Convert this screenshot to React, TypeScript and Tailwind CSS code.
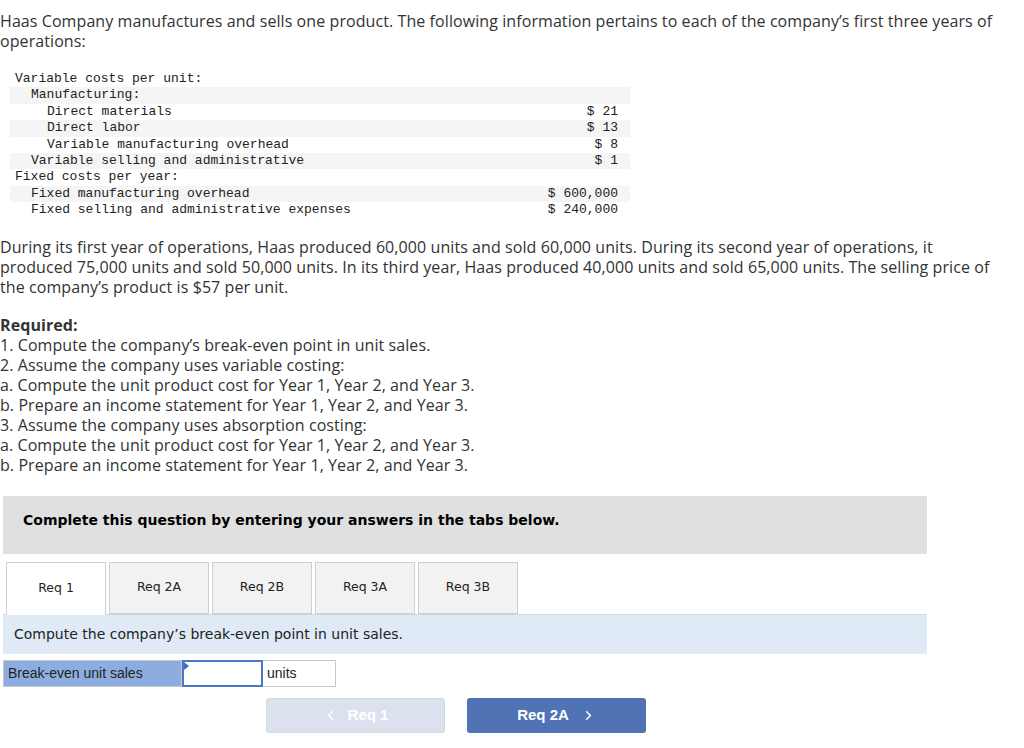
import React from "react";
import { ChevronLeft, ChevronRight } from "lucide-react";

const rows: { label: string; indent: number; value?: string }[] = [
  { label: "Variable costs per unit:", indent: 0 },
  { label: "Manufacturing:", indent: 1 },
  { label: "Direct materials", indent: 2, value: "$ 21" },
  { label: "Direct labor", indent: 2, value: "$ 13" },
  { label: "Variable manufacturing overhead", indent: 2, value: "$ 8" },
  { label: "Variable selling and administrative", indent: 1, value: "$ 1" },
  { label: "Fixed costs per year:", indent: 0 },
  { label: "Fixed manufacturing overhead", indent: 1, value: "$ 600,000" },
  { label: "Fixed selling and administrative expenses", indent: 1, value: "$ 240,000" },
];

const tabs = ["Req 1", "Req 2A", "Req 2B", "Req 3A", "Req 3B"];

export default function App() {
  return (
    <div className="w-[1024px] h-[748px] bg-white text-[#333] overflow-hidden">
      {/* Problem text */}
      <div className="font-['Open_Sans',sans-serif] text-[16px] tracking-[0.08px] leading-5 pt-[11px]">
        <p>
          Haas Company manufactures and sells one product. The following information pertains to each of the company’s first three years of
          <br />
          operations:
        </p>
      </div>

      {/* Cost table */}
      <div className="mt-[20px] ml-[10px] w-[620px] font-['Liberation_Mono',monospace] text-[13px] text-[#222]">
        {rows.map((r, i) => (
          <div
            key={r.label}
            className={`flex justify-between h-[16.4px] leading-[16.4px] pr-[12px] ${
              i % 2 === 1 ? "bg-[#f5f5f5]" : "bg-white"
            }`}
          >
            <span
              className={
                r.indent === 0 ? "pl-[5px]" : r.indent === 1 ? "pl-[21px]" : "pl-[37px]"
              }
            >
              {r.label}
            </span>
            <span>{r.value}</span>
          </div>
        ))}
      </div>

      <div className="font-['Open_Sans',sans-serif] text-[16px] tracking-[0.08px] leading-5">
        <p className="mt-[18px]">
          During its first year of operations, Haas produced 60,000 units and sold 60,000 units. During its second year of operations, it
          <br />
          produced 75,000 units and sold 50,000 units. In its third year, Haas produced 40,000 units and sold 65,000 units. The selling price of
          <br />
          the company’s product is $57 per unit.
        </p>

        <div className="mt-[18px]">
          <p className="font-bold">Required:</p>
          <p>1. Compute the company’s break-even point in unit sales.</p>
          <p>2. Assume the company uses variable costing:</p>
          <p>a. Compute the unit product cost for Year 1, Year 2, and Year 3.</p>
          <p>b. Prepare an income statement for Year 1, Year 2, and Year 3.</p>
          <p>3. Assume the company uses absorption costing:</p>
          <p>a. Compute the unit product cost for Year 1, Year 2, and Year 3.</p>
          <p>b. Prepare an income statement for Year 1, Year 2, and Year 3.</p>
        </div>
      </div>

      {/* Tabs area */}
      <div className="ml-[3px] w-[924px] font-['DejaVu_Sans',sans-serif]">
        <div className="mt-[21px] h-[58px] bg-[#e0e0e0] flex items-center pl-[20px] pb-[8px]">
          <span className="font-bold text-[14px] text-black">
            Complete this question by entering your answers in the tabs below.
          </span>
        </div>

        <div className="mt-[8px] flex gap-[3px] pl-[3px]">
          {tabs.map((t, i) => (
            <div
              key={t}
              className={`w-[100px] h-[52px] flex items-center justify-center text-[12.5px] text-[#222] border border-[#cfcfcf] ${
                i === 0 ? "bg-white border-b-0 h-[53px] -mb-px relative z-10" : "bg-[#f2f2f2]"
              }`}
            >
              {t}
            </div>
          ))}
        </div>

        <div className="h-[40px] bg-[#dfeaf6] border-t border-[#d0d8e2] flex items-center pl-[11px] text-[14px] text-[#222]">
          Compute the company’s break-even point in unit sales.
        </div>

        <div className="mt-[6px] flex h-[27px] font-['Liberation_Sans',sans-serif] text-[14px] text-[#222]">
          <div className="w-[179px] bg-[#8dade1] border border-[#c8c8c8] flex items-center pl-[4px]">
            Break-even unit sales
          </div>
          <div className="relative w-[81px] bg-white border-2 border-[#4a78c2]">
            <span className="absolute left-0 top-0 w-0 h-0 border-t-[4px] border-b-[4px] border-l-[5px] border-t-transparent border-b-transparent border-l-[#3a6fc4]" />
          </div>
          <div className="w-[73px] bg-white border border-[#c8c8c8] border-l-0 flex items-center pl-[4px]">
            units
          </div>
        </div>

        <div className="mt-[11px] flex font-['Liberation_Sans',sans-serif] font-bold text-[15px] text-white">
          <div className="ml-[263px] w-[179px] h-[35px] rounded-[3px] bg-[#dbe2ee] border border-[#d2d9e6] flex items-center justify-center gap-[10px]">
            <ChevronLeft size={15} strokeWidth={2.5} />
            <span>Req 1</span>
          </div>
          <div className="ml-[22px] w-[179px] h-[35px] rounded-[3px] bg-[#5073b6] flex items-center justify-center gap-[12px]">
            <span>Req 2A</span>
            <ChevronRight size={15} strokeWidth={2.5} />
          </div>
        </div>
      </div>
    </div>
  );
}
